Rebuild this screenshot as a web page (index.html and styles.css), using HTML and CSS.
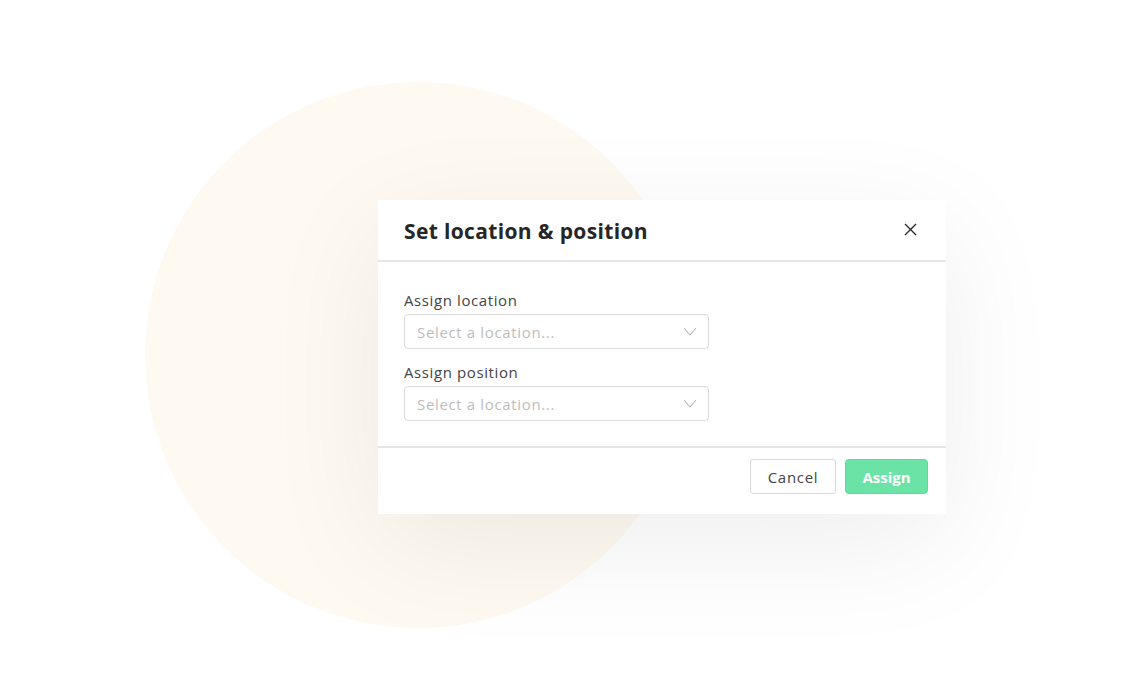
FILE: index.html
```html
<!DOCTYPE html>
<html>
<head>
<meta charset="utf-8">
<link rel="stylesheet" href="styles.css">
</head>
<body>
<div class="stage">
  <div class="blob"></div>
  <div class="modal">
    <div class="modal-header">
      <h2 class="title">Set location &amp; position</h2>
      <button class="close" aria-label="Close">
        <svg width="13" height="13" viewBox="0 0 13 13"><path d="M1 1 L12 12 M12 1 L1 12" stroke="#2a2a2a" stroke-width="1.4" fill="none"/></svg>
      </button>
    </div>
    <div class="modal-body">
      <div class="field">
        <label class="label">Assign location</label>
        <div class="select"><span class="placeholder">Select a location...</span>
          <svg class="chev" width="14" height="9" viewBox="0 0 14 9"><path d="M1 1 L7 8 L13 1" stroke="#b5b5b5" stroke-width="1.1" fill="none"/></svg>
        </div>
      </div>
      <div class="field">
        <label class="label">Assign position</label>
        <div class="select"><span class="placeholder">Select a location...</span>
          <svg class="chev" width="14" height="9" viewBox="0 0 14 9"><path d="M1 1 L7 8 L13 1" stroke="#b5b5b5" stroke-width="1.1" fill="none"/></svg>
        </div>
      </div>
    </div>
    <div class="modal-footer">
      <button class="btn btn-cancel">Cancel</button>
      <button class="btn btn-assign">Assign</button>
    </div>
  </div>
</div>
</body>
</html>
```
FILE: styles.css
```css
* { box-sizing: border-box; }
html, body { margin: 0; padding: 0; background: #fff; }
body { font-family: "Open Sans", "Liberation Sans", sans-serif; color: #2a2a2a; }
.stage { position: relative; width: 1136px; height: 700px; overflow: hidden; }
.blob {
  position: absolute; left: 145px; top: 82px; width: 546px; height: 546px;
  border-radius: 50%; background: #fffaf1;
}
.modal {
  position: absolute; left: 378px; top: 200px; width: 568px; height: 314px;
  background: #fff;
  box-shadow: 0 30px 120px rgba(0,0,0,0.07);
  display: flex; flex-direction: column;
}
.modal-header {
  height: 62px; border-bottom: 2px solid #e6e6e6;
  display: flex; align-items: center; justify-content: space-between;
  padding: 0 29px 0 26px;
}
.title { margin: 0; font-size: 21px; font-weight: 700; color: #262626; letter-spacing: 0.35px; padding-top: 2px; }
.close { border: 0; background: none; padding: 0; margin-top: -2px; display: flex; }
.modal-body { padding: 28px 26px 0; height: 186px; border-bottom: 2px solid #e6e6e6; display: flex; flex-direction: column; gap: 13px; }
.field { display: flex; flex-direction: column; gap: 4px; }
.label { font-size: 15px; color: #444; line-height: 20px; letter-spacing: 0.6px; }
.select {
  width: 305px; height: 35px; border: 1px solid #dcdcdc; border-radius: 4px;
  display: flex; align-items: center; justify-content: space-between;
  padding: 0 11px 0 12px;
}
.placeholder { font-size: 15px; color: #bdbdbd; letter-spacing: 0.65px; }
.modal-footer { flex: 1; display: flex; justify-content: flex-end; align-items: flex-start; gap: 9px; padding: 11px 18px 0 0; }
.btn { height: 35px; font-family: inherit; font-size: 15px; border-radius: 3px; padding: 0; }
.btn-cancel { width: 86px; background: #fff; border: 1px solid #d9d9d9; color: #444; letter-spacing: 0.7px; }
.btn-assign { width: 83px; background: #6be3a6; border: 1px solid #5fd99a; color: #fff; font-weight: 700; border-radius: 4px; }
```
